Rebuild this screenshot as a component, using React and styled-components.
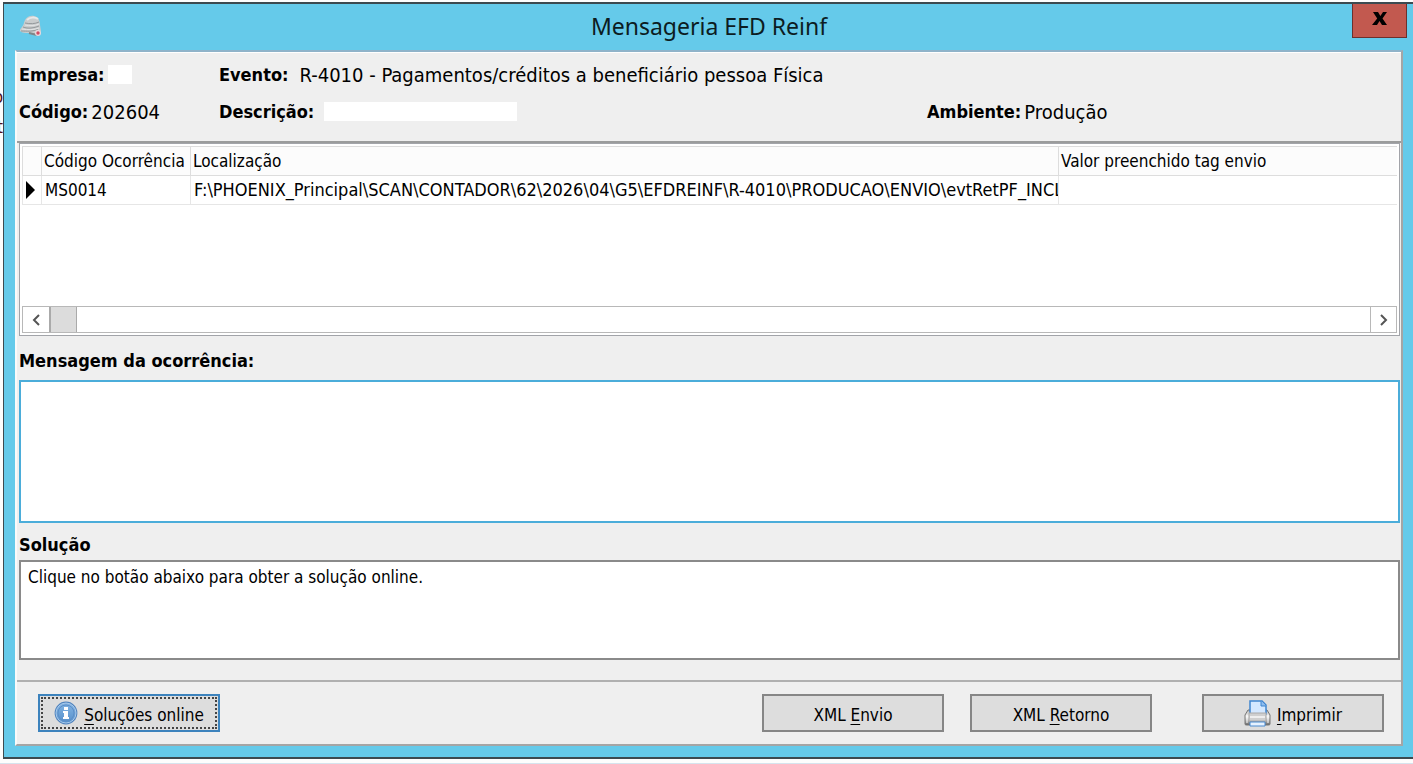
import styled, { createGlobalStyle, css } from "styled-components";

const App = () => {
    return(
        <>
        <GlobalStyle/>
        <Desktop>
            <Behind aria-hidden="true">
                <i>o</i>
                <i>t</i>
            </Behind>
            <Dialog role="dialog" aria-labelledby="title">
                <TitleBar>
                    <HelmetIcon/>
                    <Title id="title">Mensageria EFD Reinf</Title>
                    <CloseButton aria-label="Fechar"><CloseIcon/></CloseButton>
                </TitleBar>
                <Body>
                    <Header>
                        <Field><b>Empresa:</b><Blank $width="24px"/></Field>
                        <Field $wide><b>Evento:</b><span>R-4010 - Pagamentos/créditos a beneficiário pessoa Física</span></Field>
                        <Field><b>Código:</b><span>202604</span></Field>
                        <Field $gap="10px"><b>Descrição:</b><Blank $width="193px"/></Field>
                        <Field><b>Ambiente:</b><span>Produção</span></Field>
                    </Header>
                    <Main>
                        <GridBox>
                            <Table>
                                <colgroup>
                                    <col style={{ width: 19 }}/>
                                    <col style={{ width: 149 }}/>
                                    <col style={{ width: 868 }}/>
                                    <col/>
                                </colgroup>
                                <thead>
                                    <tr>
                                        <th aria-label="Linha atual"></th>
                                        <th>Código Ocorrência</th>
                                        <th>Localização</th>
                                        <th>Valor preenchido tag envio</th>
                                    </tr>
                                </thead>
                                <tbody>
                                    <tr>
                                        <td><Marker/></td>
                                        <td>MS0014</td>
                                        <PathCell>F:\PHOENIX_Principal\SCAN\CONTADOR\62\2026\04\G5\EFDREINF\R-4010\PRODUCAO\ENVIO\evtRetPF_INCL</PathCell>
                                        <td></td>
                                    </tr>
                                </tbody>
                            </Table>
                            <ScrollBar>
                                <ScrollButton aria-label="Rolar para a esquerda"><Chevron d="M9 1 4 6l5 5"/></ScrollButton>
                                <Track><Thumb/></Track>
                                <ScrollButton $end aria-label="Rolar para a direita"><Chevron d="M3 1l5 5-5 5"/></ScrollButton>
                            </ScrollBar>
                        </GridBox>
                        <Label htmlFor="mensagem" $height="44px">Mensagem da ocorrência:</Label>
                        <Memo id="mensagem" $active/>
                        <Label htmlFor="solucao" $height="37px">Solução</Label>
                        <Memo id="solucao" readOnly defaultValue="Clique no botão abaixo para obter a solução online."/>
                    </Main>
                    <Footer>
                        <Button $focused><InfoIcon/><span><u>S</u>oluções online</span></Button>
                        <Actions>
                            <Button><span>XML <u>E</u>nvio</span></Button>
                            <Button><span>XML <u>R</u>etorno</span></Button>
                            <Button $apart><PrinterIcon/><span><u>I</u>mprimir</span></Button>
                        </Actions>
                    </Footer>
                </Body>
            </Dialog>
        </Desktop>
        </>
    );
};

const HelmetIcon = () => (
    <svg width="24" height="24" viewBox="0 0 24 24" fill="none" aria-hidden="true">
        <path d="M1 17C1 14 4 13 5 9 6 4 10 1 15 2c5 1 6 5 6 9l1 6-4 4-8-2c-4 0-7 0-9-2Z" fill="#c9cccd"/>
        <path d="M8 6c3-3 8-3 11-1" stroke="#e6e8e9" strokeWidth="2"/>
        <path d="M6 9c5 1 10 1 14-1M4 13c5 2 11 1 16-1M2 17c6 0 12 1 17-2" stroke="#93989b"/>
        <path d="M6 11c5 1 9 1 14-1M3 15c6 1 12 1 17-1" stroke="#e2e4e5"/>
        <path d="M10 19l8 2" stroke="#7f8588" strokeWidth="2"/>
        <circle cx="19" cy="19" r="3" fill="#ead9de"/>
        <circle cx="19" cy="19" r="1.700" fill="#cf4c62"/>
    </svg>
);

const CloseIcon = () => (
    <svg width="16" height="14" viewBox="0 0 16 14" aria-hidden="true">
        <path d="M1 0h5l2.400 4L11 0h4l-4.500 6.500L15 13h-5L7.500 9 5 13H0l5.200-6.500Z" fill="#000"/>
    </svg>
);

const Marker = () => (
    <svg width="9" height="18" viewBox="0 0 9 18" aria-hidden="true">
        <path d="M0 0 9 9 0 18Z" fill="#000"/>
    </svg>
);

const Chevron = ({ d }) => (
    <svg width="12" height="12" viewBox="0 0 12 12" fill="none" aria-hidden="true">
        <path d={d} stroke="#555" strokeWidth="2"/>
    </svg>
);

const InfoIcon = () => (
    <svg width="24" height="24" viewBox="0 0 24 24" aria-hidden="true">
        <defs>
            <linearGradient id="info" x1="0" y1="0" x2="0" y2="1">
                <stop offset="0" stopColor="#83b4e3"/>
                <stop offset="1" stopColor="#5690cb"/>
            </linearGradient>
        </defs>
        <circle cx="12" cy="12" r="11.400" fill="#4f83be"/>
        <circle cx="12" cy="12" r="10" fill="url(#info)" stroke="#a9caeb"/>
        <circle cx="12" cy="12" r="8" fill="none" stroke="#5c8fc8"/>
        <path d="M10 6h4v3h-4zM9 10h5v6h1v2H9v-2h1v-4H9z" fill="#fff"/>
    </svg>
);

const PrinterIcon = () => (
    <svg width="27" height="27" viewBox="0 0 27 27" aria-hidden="true">
        <defs>
            <linearGradient id="body" x1="0" y1="0" x2="0" y2="1">
                <stop offset="0" stopColor="#b5b5b5"/>
                <stop offset=".45" stopColor="#f4f4f4"/>
                <stop offset="1" stopColor="#666"/>
            </linearGradient>
        </defs>
        <path d="M4 10h19l3 5v9c0 1-1 1-2 1H3c-1 0-2 0-2-1v-9Z" fill="url(#body)" stroke="#777"/>
        <path d="M6 14V1h12l4 4v9Z" fill="#d4e8ff" stroke="#3f85cf" strokeWidth="1.500"/>
        <path d="M17 1v5h5" fill="#8dbdf0" stroke="#3f85cf"/>
        <path d="M5 13h17v8H5z" fill="#cfcfcf" stroke="#aaa"/>
        <path d="M6 17h15" stroke="#eee" strokeWidth="2"/>
        <path d="M3 15v8M24 15v8" stroke="#fafafa"/>
        <path d="M6 22h15v4H6Z" fill="#e6f2ff" stroke="#4a8bd0"/>
    </svg>
);

const GlobalStyle = createGlobalStyle`
    *{
        box-sizing: border-box;
    }
    body{
        margin: 0;
        background: #fdfdfd;
        color: #000;
        font-family: "DejaVu Sans Condensed", "DejaVu Sans", sans-serif;
        font-size: 17px;
    }
    button, textarea{
        font: inherit;
        color: inherit;
        border-radius: 0;
    }
`;

const Desktop = styled.div`
    display: flex;
    min-height: 100vh;
    padding: 2px 0 4px;
    border-bottom: 1px solid #d6e4ee;
    overflow: hidden;
`;

/* sliver of the window underneath */
const Behind = styled.div`
    display: flex;
    flex-direction: column;
    width: 3px;
    padding-top: 80px;
    overflow: hidden;
    direction: rtl;
    line-height: 30px;
    i{
        height: 30px;
        font-style: normal;
        color: #501018;
    }
`;

const Dialog = styled.div`
    display: flex;
    flex-direction: column;
    flex: 1;
    min-width: 0;
    padding: 0 10px 11px 11px;
    background: #65caea;
    border: 2px solid #3c4a50;
    border-width: 2px 0 2px 1px;
`;

const TitleBar = styled.div`
    display: grid;
    grid-template-columns: 1fr auto 1fr;
    height: 46px;
    margin: 0 -4px 0 -4px;
    svg{
        margin: 10px 0 0 8px;
    }
`;

const Title = styled.h1`
    margin: 0;
    font-family: "Noto Sans", "Open Sans", sans-serif;
    font-size: 23px;
    font-weight: 400;
    line-height: 44px;
    color: #0c1c22;
`;

const CloseButton = styled.button`
    display: flex;
    justify-content: center;
    justify-self: end;
    width: 55px;
    height: 34px;
    padding: 0;
    background: #c2594f;
    border: 1px solid #6d302d;
    border-top: 0;
    svg{
        margin: 8px 0 0;
    }
`;

const Body = styled.div`
    display: flex;
    flex-direction: column;
    flex: 1;
    background: #efefef;
    border: 2px solid #a5a5a5;
    border-top-color: #8fb3c9;
    border-left-color: #fafafa;
`;

const Header = styled.div`
    display: grid;
    grid-template-columns: 200px 708px 1fr;
    grid-auto-rows: 37px;
    height: 91px;
    padding: 3px 2px 0;
    border-top: 1px solid #fff;
    border-bottom: 2px solid #9b9c9c;
`;

const Field = styled.div`
    display: flex;
    align-items: center;
    gap: ${(props) => props.$gap || (props.$wide ? "11px" : "3px")};
    grid-column: ${(props) => props.$wide && "span 2"};
    font-size: 20px;
    white-space: nowrap;
    b{
        font-size: 18px;
    }
`;

const Blank = styled.span`
    width: ${(props) => props.$width};
    height: 19px;
    background: #fff;
`;

const Main = styled.div`
    display: flex;
    flex-direction: column;
    flex: 1;
    padding: 0 1px 20px 2px;
`;

const GridBox = styled.div`
    display: flex;
    flex-direction: column;
    justify-content: space-between;
    height: 193px;
    padding: 2px;
    background: #fff;
    border: 1px solid #a2a4a9;
`;

const Table = styled.table`
    width: 100%;
    table-layout: fixed;
    border-collapse: collapse;
    th, td{
        height: 29px;
        padding: 0 0 0 2px;
        border: 1px solid #e6e6e6;
        border-right: 0;
        text-align: left;
        font-weight: 400;
        white-space: nowrap;
        overflow: hidden;
    }
    th{
        background: #fcfcfc;
        border-color: #ddd;
    }
    td{
        padding-left: 3px;
    }
    td svg{
        display: block;
    }
`;

const PathCell = styled.td`
    font-size: 18px;
    line-height: 20px;
`;

const ScrollBar = styled.div`
    display: flex;
    height: 27px;
    border: 1px solid #b8b8b8;
`;

const ScrollButton = styled.button`
    display: grid;
    place-items: center;
    width: 26px;
    padding: 0;
    background: #fff;
    border: 0;
    border-left: ${(props) => props.$end && "1px solid #b8b8b8"};
`;

const Track = styled.div`
    flex: 1;
`;

const Thumb = styled.div`
    width: 28px;
    height: 100%;
    background: #dcdcdc;
    border: 2px solid #aaa;
    border-width: 0 1px 0 2px;
`;

const Label = styled.label`
    height: ${(props) => props.$height};
    line-height: ${(props) => (props.$height === "44px" ? "50px" : "44px")};
    font-size: 18px;
    font-weight: 700;
`;

const Memo = styled.textarea`
    display: block;
    width: 100%;
    height: ${(props) => (props.$active ? "143px" : "100px")};
    padding: 4px 7px;
    background: #fff;
    border: 2px solid ${(props) => (props.$active ? "#4badda" : "#8a8a8a")};
    outline: 0;
    resize: none;
    line-height: 22px;
`;

const Footer = styled.div`
    display: flex;
    justify-content: space-between;
    margin-top: auto;
    padding: 12px 17px 12px 21px;
    border-top: 2px solid #b0b0b0;
`;

const Actions = styled.div`
    display: flex;
    gap: 26px;
`;

const Button = styled.button`
    display: flex;
    align-items: center;
    justify-content: center;
    gap: 6px;
    width: 182px;
    height: 38px;
    padding: 0;
    margin-left: ${(props) => props.$apart && "24px"};
    background: #ddd;
    border: 2px solid #868686;
    span{
        padding-top: 3px;
    }
    u{
        text-underline-offset: 3px;
    }
    ${(props) => props.$focused && css`
        border-color: #3c83bd;
        outline: 2px dotted #444;
        outline-offset: -5px;
    `}
`;

export default App;
